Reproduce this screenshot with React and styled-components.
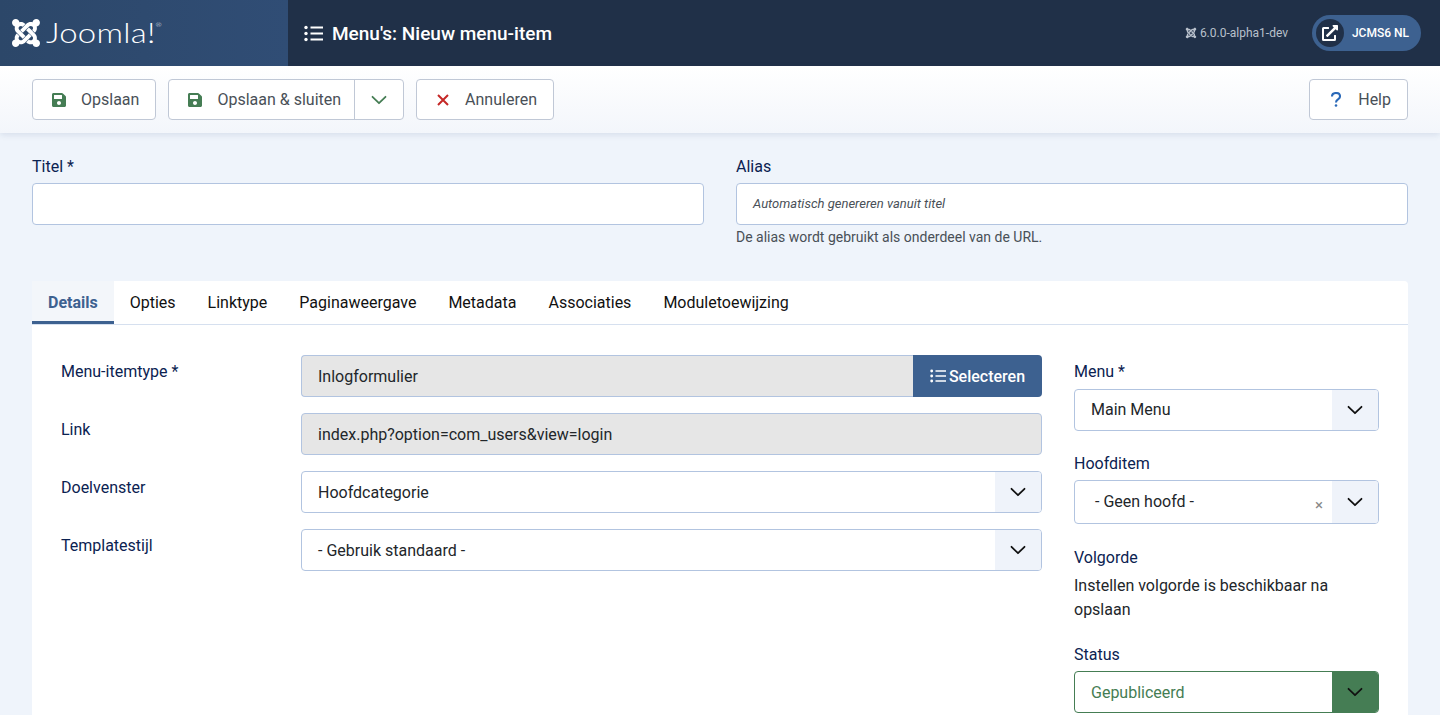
import React from 'react';
import styled, { createGlobalStyle } from 'styled-components';
import { FaJoomla, FaSave, FaExternalLinkAlt } from 'react-icons/fa';

const Global = createGlobalStyle`
	html, body {
		margin: 0;
		height: 100%;
		overflow: hidden;
		background: #eff4fb;
		font-family: Roboto, "Liberation Sans", sans-serif;
		font-size: 16px;
		color: #22262a;
	}
	* { box-sizing: border-box; }
`;

const Header = styled.header`
	display: flex;
	height: 66px;
	background: #203048;
	color: #fff;
`;

const Brand = styled.div`
	display: flex;
	align-items: center;
	width: 288px;
	padding-left: 10px;
	gap: 4px;
	background: linear-gradient(90deg, #2c4769, #304d75);
`;

const LogoMark = styled(FaJoomla)`
	width: 32px;
	height: 32px;
`;

const LogoWord = styled.span`
	display: flex;
	font-family: Lato, sans-serif;
	font-weight: 300;
	font-size: 27px;
	line-height: 1;
	letter-spacing: 0.2px;
	margin-top: -2px;
	transform: scaleX(1.22);
	transform-origin: left center;
	sup {
		font-size: 6px;
		line-height: 1;
		margin-top: 3px;
	}
`;

const PageTitle = styled.h1`
	display: flex;
	align-items: center;
	flex: 1;
	gap: 9px;
	margin: 0;
	padding-left: 16px;
	font-size: 19px;
	font-weight: 500;
	svg { width: 19px; height: 19px; }
`;

const Version = styled.div`
	display: flex;
	align-items: center;
	gap: 3px;
	margin-right: 24px;
	font-size: 12px;
	color: #b9c1cc;
	svg { width: 12px; height: 12px; }
`;

const SiteLink = styled.div`
	display: flex;
	align-items: center;
	align-self: center;
	justify-content: space-between;
	width: 109px;
	height: 36px;
	margin-right: 19px;
	padding: 0 12px 0 4px;
	border-radius: 18px;
	background: #3d6190;
	font-size: 12px;
	font-weight: 500;
`;

const SiteIcon = styled.span`
	display: flex;
	align-items: center;
	justify-content: center;
	width: 28px;
	height: 28px;
	border-radius: 50%;
	background: #203048;
	svg { width: 16px; height: 16px; }
`;

const Toolbar = styled.div`
	display: flex;
	align-items: center;
	gap: 12px;
	height: 67px;
	padding: 0 32px;
	background: linear-gradient(180deg, #fff, #f3f6fb);
	box-shadow: 0 2px 6px rgba(40, 70, 120, 0.12);
`;

const ButtonBox = styled.div`
	display: flex;
	align-items: center;
	height: 41px;
	border: 1px solid #c0c8d6;
	border-radius: 4px;
	background: #fff;
	color: #495057;
	font-size: 16px;
	margin-left: ${ props => props.$push ? 'auto' : 0 };
`;

const ButtonMain = styled.div`
	display: flex;
	align-items: center;
	height: 100%;
	gap: 15px;
	padding: 0 ${ props => props.$split ? 13 : 16 }px 0 19px;
`;

const ButtonIcon = styled.span`
	display: flex;
	justify-content: center;
	width: 14px;
	color: ${ props => props.$color };
	svg { height: ${ props => props.$size || 16 }px; width: auto; }
`;

const ButtonCaret = styled.div`
	display: flex;
	align-items: center;
	justify-content: center;
	width: 49px;
	height: 100%;
	border-left: 1px solid #c0c8d6;
	color: #457d54;
`;

const Main = styled.main`
	padding: 22px 32px 0;
`;

const TopFields = styled.div`
	display: grid;
	grid-template-columns: 672px 672px;
	column-gap: 32px;
	margin-bottom: 34px;
`;

const Label = styled.label`
	display: block;
	color: #0b2251;
	line-height: 24px;
	margin-bottom: ${ props => props.$gap || 4 }px;
`;

const TextInput = styled.div`
	display: flex;
	align-items: center;
	height: 42px;
	padding: 0 16px;
	border: 1px solid #b2c4e0;
	border-radius: 4px;
	background: #fff;
`;

const Placeholder = styled.span`
	font-size: 13px;
	font-style: italic;
	color: #495057;
	padding-bottom: 2px;
`;

const HelpText = styled.div`
	margin-top: 2px;
	font-size: 14px;
	line-height: 20px;
	color: #495057;
`;

const Card = styled.section`
	background: #fff;
	border-radius: 4px 4px 0 0;
	min-height: 500px;
`;

const Tabs = styled.nav`
	display: flex;
	height: 44px;
	border-bottom: 1px solid #d6e0ef;
`;

const Tab = styled.div`
	display: flex;
	align-items: center;
	height: 43px;
	padding: ${ props => props.$active ? '3px' : 0 } 16px 0;
	font-size: 16px;
	color: ${ props => props.$active ? '#3d6190' : '#111' };
	font-weight: ${ props => props.$active ? 700 : 400 };
	background: ${ props => props.$active ? '#f3f6fa' : 'transparent' };
	border-bottom: ${ props => props.$active ? '3px solid #3d6190' : 0 };
`;

const Panel = styled.div`
	display: grid;
	grid-template-columns: 1fr 305px;
	column-gap: 32px;
	padding: 30px 29px 0;
`;

const LeftColumn = styled.div`
	display: flex;
	flex-direction: column;
	gap: 16px;
`;

const Row = styled.div`
	display: grid;
	grid-template-columns: 240px 741px;
`;

const RowLabel = styled.label`
	color: #0b2251;
	line-height: 24px;
	padding-top: 5px;
`;

const Readonly = styled.div`
	display: flex;
	align-items: center;
	flex: 1;
	height: 42px;
	padding: 0 16px;
	border: 1px solid #b2c4e0;
	border-radius: ${ props => props.$joined ? '4px 0 0 4px' : '4px' };
	border-right-width: ${ props => props.$joined ? 0 : '1px' };
	background: #e6e6e6;
`;

const InputGroup = styled.div`
	display: flex;
`;

const SelectButton = styled.div`
	display: flex;
	align-items: center;
	justify-content: center;
	gap: 3px;
	width: 129px;
	height: 42px;
	border-radius: 0 4px 4px 0;
	background: #3d6190;
	color: #fff;
	font-weight: 500;
	svg { width: 16px; height: 16px; }
`;

const SelectBox = styled.div`
	display: flex;
	align-items: center;
	height: ${ props => props.$height || 42 }px;
	border: 1px solid ${ props => props.$success ? '#457d54' : '#b2c4e0' };
	border-radius: 4px;
	background: #fff;
	color: ${ props => props.$success ? '#457d54' : 'inherit' };
	overflow: hidden;
`;

const SelectValue = styled.span`
	flex: 1;
	padding-left: ${ props => props.$inset || 16 }px;
	padding-bottom: ${ props => props.$lift || 0 }px;
`;

const Clear = styled.span`
	margin-right: 9px;
	margin-top: 6px;
	font-size: 15px;
	line-height: 1;
	color: #888;
`;

const Chevron = styled.span`
	display: flex;
	align-items: center;
	justify-content: center;
	width: 46px;
	height: 100%;
	background: ${ props => props.$success ? '#457d54' : '#eff3fa' };
	color: #111;
`;

const SideColumn = styled.div`
	display: flex;
	flex-direction: column;
	padding-top: 5px;
`;

const SideField = styled.div`
	margin-bottom: ${ props => props.$gap }px;
`;

const Note = styled.p`
	margin: 0;
	line-height: 24px;
`;

const ChevronGlyph = () => (
	<svg width="16" height="10" viewBox="0 0 16 10" fill="none" stroke="currentColor" strokeWidth="1.8" strokeLinecap="round" strokeLinejoin="round">
		<path d="M1.5 1.8 8 8.2l6.5-6.4" />
	</svg>
);

const ListGlyph = () => (
	<svg viewBox="0 0 19 19" fill="currentColor" stroke="none">
		<circle cx="2" cy="3.5" r="1.7" />
		<circle cx="2" cy="9.5" r="1.7" />
		<circle cx="2" cy="15.5" r="1.7" />
		<path d="M6.5 2.6h12.5v1.8H6.5zM6.5 8.6h12.5v1.8H6.5zM6.5 14.6h12.5v1.8H6.5z" />
	</svg>
);

const CrossGlyph = () => (
	<svg viewBox="0 0 12 12" fill="none" stroke="currentColor" strokeWidth="2">
		<path d="M1 1l10 10M11 1 1 11" />
	</svg>
);

const QuestionGlyph = () => (
	<svg viewBox="0 0 10 15" fill="none" stroke="currentColor" strokeWidth="2.1">
		<path d="M1 4.6C1 2.4 2.7 1 5 1s4 1.4 4 3.4c0 1.5-.9 2.3-2 3C5.7 8.2 5 9 5 10.6" />
		<circle cx="5" cy="13.5" r="1.3" fill="currentColor" stroke="none" />
	</svg>
);

const Select = ( { value, inset, lift, height, success, clear } ) => (
	<SelectBox $height={ height } $success={ success }>
		<SelectValue $inset={ inset } $lift={ lift }>{ value }</SelectValue>
		{ clear && <Clear>×</Clear> }
		<Chevron $success={ success }><ChevronGlyph /></Chevron>
	</SelectBox>
);

const tabs = [ 'Details', 'Opties', 'Linktype', 'Paginaweergave', 'Metadata', 'Associaties', 'Moduletoewijzing' ];

export default function App() {
	return (
		<>
			<Global />
			<Header>
				<Brand>
					<LogoMark />
					<LogoWord>Joomla!<sup>®</sup></LogoWord>
				</Brand>
				<PageTitle><ListGlyph /> Menu's: Nieuw menu-item</PageTitle>
				<Version><FaJoomla /> 6.0.0-alpha1-dev</Version>
				<SiteLink>
					<SiteIcon><FaExternalLinkAlt /></SiteIcon>
					JCMS6 NL
				</SiteLink>
			</Header>
			<Toolbar>
				<ButtonBox>
					<ButtonMain><ButtonIcon $color="#457d54"><FaSave /></ButtonIcon> Opslaan</ButtonMain>
				</ButtonBox>
				<ButtonBox>
					<ButtonMain $split><ButtonIcon $color="#457d54"><FaSave /></ButtonIcon> Opslaan &amp; sluiten</ButtonMain>
					<ButtonCaret><ChevronGlyph /></ButtonCaret>
				</ButtonBox>
				<ButtonBox>
					<ButtonMain><ButtonIcon $color="#c52827" $size={ 12 }><CrossGlyph /></ButtonIcon> Annuleren</ButtonMain>
				</ButtonBox>
				<ButtonBox $push>
					<ButtonMain><ButtonIcon $color="#2a69b8" $size={ 15 }><QuestionGlyph /></ButtonIcon> Help</ButtonMain>
				</ButtonBox>
			</Toolbar>
			<Main>
				<TopFields>
					<div>
						<Label>Titel *</Label>
						<TextInput />
					</div>
					<div>
						<Label>Alias</Label>
						<TextInput><Placeholder>Automatisch genereren vanuit titel</Placeholder></TextInput>
						<HelpText>De alias wordt gebruikt als onderdeel van de URL.</HelpText>
					</div>
				</TopFields>
				<Card>
					<Tabs>
						{ tabs.map( ( tab, i ) => <Tab key={ tab } $active={ 0 === i }>{ tab }</Tab> ) }
					</Tabs>
					<Panel>
						<LeftColumn>
							<Row>
								<RowLabel>Menu-itemtype *</RowLabel>
								<InputGroup>
									<Readonly $joined>Inlogformulier</Readonly>
									<SelectButton><ListGlyph /> Selecteren</SelectButton>
								</InputGroup>
							</Row>
							<Row>
								<RowLabel>Link</RowLabel>
								<Readonly>index.php?option=com_users&amp;view=login</Readonly>
							</Row>
							<Row>
								<RowLabel>Doelvenster</RowLabel>
								<Select value="Hoofdcategorie" />
							</Row>
							<Row>
								<RowLabel>Templatestijl</RowLabel>
								<Select value="- Gebruik standaard -" />
							</Row>
						</LeftColumn>
						<SideColumn>
							<SideField $gap={ 21 }>
								<Label $gap={ 5 }>Menu *</Label>
								<Select value="Main Menu" lift={ 2 } />
							</SideField>
							<SideField $gap={ 22 }>
								<Label $gap={ 4 }>Hoofditem</Label>
								<Select value="- Geen hoofd -" inset={ 20 } lift={ 2 } height={ 44 } clear />
							</SideField>
							<SideField $gap={ 21 }>
								<Label $gap={ 4 }>Volgorde</Label>
								<Note>Instellen volgorde is beschikbaar na opslaan</Note>
							</SideField>
							<SideField $gap={ 0 }>
								<Label $gap={ 4 }>Status</Label>
								<Select value="Gepubliceerd" success />
							</SideField>
						</SideColumn>
					</Panel>
				</Card>
			</Main>
		</>
	);
}
